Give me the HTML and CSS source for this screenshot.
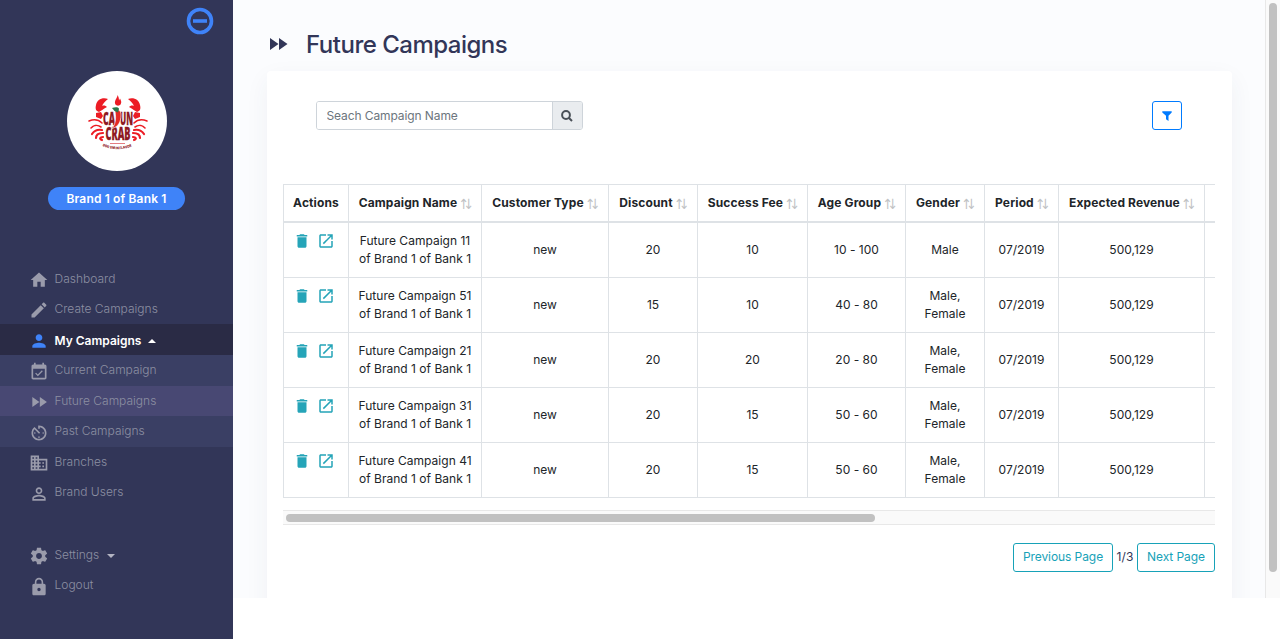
FILE: index.html
```html
<!DOCTYPE html>
<html lang="en">
<head>
<meta charset="utf-8">
<title>Future Campaigns</title>
<link rel="stylesheet" href="styles.css">
</head>
<body>
<svg class="defs" width="0" height="0">
  <symbol id="forward" viewBox="0 0 24 24"><path d="M4 18l8.5-6L4 6v12zm9-12v12l8.5-6L13 6z"/></symbol>
  <symbol id="trash" viewBox="0 0 24 24"><path d="M6 19c0 1.100.9 2 2 2h8c1.100 0 2-.9 2-2V7H6v12zM19 4h-3.500l-1-1h-5l-1 1H5v2h14V4z"/></symbol>
  <symbol id="open" viewBox="0 0 24 24"><path d="M19 19H5V5h7V3H5c-1.110 0-2 .9-2 2v14c0 1.100.89 2 2 2h14c1.100 0 2-.9 2-2v-7h-2v7zM14 3v2h3.590l-9.830 9.830 1.410 1.410L19 6.410V10h2V3h-7z"/></symbol>
</svg>
<div class="app">
  <aside class="sidebar">
    <svg class="collapse" viewBox="0 0 28 28"><circle cx="14" cy="14" r="11.500"/><path d="M7 14h14"/></svg>
    <svg class="logo" viewBox="0 0 100 100">
      <circle cx="50" cy="50" r="50" fill="#fff"/>
      <g fill="#ec1c24">
        <path d="M41 28c-6-2-11 1-12 6-1 4 0 6 3 7 2-1 4-3 8-5-1-1-3-2-5-1 1-2 3-5 6-7z"/>
        <path d="M61 28c6-2 11 1 12 6 1 4 0 6-3 7-2-1-4-3-8-5 1-1 3-2 5-1-1-2-3-5-6-7z"/>
        <path d="M29 42l5-1 2 4-2 3-5-2zM73 42l-5-1-2 4 2 3 5-2zM50.500 24c0 3-4 6-2 9.500 1 1.500 4 1.500 5 0 1.500-2 .5-4-.5-6l-1 2c0-2-.5-4-1.500-5.500z"/>
      </g>
      <g fill="none" stroke="#ec1c24" stroke-linecap="round">
        <path stroke-width="1.600" d="M35 52c-4-4-8-4-13-2M34 56c-4-3-8-1-10 1M67 52c4-4 8-4 13-2M68 56c4-3 8-1 10 1"/>
        <path stroke-width="2.200" d="M35 59c-5-1-8 1-10 4M36 62c-4 0-7 1-7 5M36 66c-3 0-4 2-1 3M67 59c5-1 8 1 10 4M66 62c4 0 7 1 7 5M66 66c3 0 4 2 1 3"/>
      </g>
      <text class="logo-word" x="36" y="54" font-size="18" textLength="12" lengthAdjust="spacingAndGlyphs">CA</text>
      <text class="logo-word" x="53" y="54" font-size="18" textLength="13" lengthAdjust="spacingAndGlyphs">UN</text>
      <text class="logo-word" x="38.500" y="69" font-size="18" textLength="25" lengthAdjust="spacingAndGlyphs">CRAB</text>
      <path d="M48 40c3-2 6-1 6 4 0 7-3 12-9 13.500 3-4 4.500-8 3-17.500z" fill="#e52a24" stroke="#fff" stroke-width=".6"/>
      <path d="M45 37c3-1 7-1 7 1l-1 3.500-3.500-1.500z" fill="#28794a"/>
      <path d="M43 72.500h15" stroke="#d8454b" stroke-width=".7"/>
      <path id="arc" d="M35.500 75Q50 81.500 66 75" fill="none"/>
      <text class="logo-tag"><textPath href="#arc" textLength="30" lengthAdjust="spacingAndGlyphs">BOIL'EM IN FLAVOR</textPath></text>
    </svg>
    <div class="brand">Brand 1 of Bank 1</div>
    <nav class="menu">
      <a class="item first"><svg viewBox="0 0 24 24"><path d="M10 20v-6h4v6h5v-8h3L12 3 2 12h3v8z"/></svg><span>Dashboard</span></a>
      <a class="item"><svg viewBox="0 0 24 24"><path d="M3 17.250V21h3.750L17.810 9.940l-3.750-3.750L3 17.250zM20.710 7.040c.39-.39.39-1.020 0-1.410l-2.340-2.340c-.39-.39-1.020-.39-1.410 0l-1.830 1.830 3.750 3.750 1.830-1.830z"/></svg><span>Create Campaigns</span></a>
      <a class="item active"><svg viewBox="0 0 24 24"><path d="M12 12c2.210 0 4-1.790 4-4s-1.790-4-4-4-4 1.790-4 4 1.790 4 4 4zm0 2c-2.670 0-8 1.340-8 4v2h16v-2c0-2.660-5.330-4-8-4z"/></svg><span>My Campaigns</span><i class="caret up"></i></a>
      <a class="item sub"><svg viewBox="0 0 24 24"><path d="M16.530 11.060L15.470 10l-4.880 4.880-2.120-2.120-1.060 1.060L10.590 17l5.940-5.940zM19 3h-1V1h-2v2H8V1H6v2H5c-1.110 0-1.990.9-1.990 2L3 19c0 1.100.89 2 2 2h14c1.100 0 2-.9 2-2V5c0-1.100-.9-2-2-2zm0 16H5V8h14v11z"/></svg><span>Current Campaign</span></a>
      <a class="item sub selected"><svg><use href="#forward"/></svg><span>Future Campaigns</span></a>
      <a class="item sub"><svg viewBox="0 0 24 24"><path d="M11 17c0 .55.45 1 1 1s1-.45 1-1-.45-1-1-1-1 .45-1 1zm0-14v4h2V5.080c3.390.49 6 3.390 6 6.920 0 3.870-3.130 7-7 7s-7-3.130-7-7c0-1.680.59-3.220 1.580-4.420L12 13l1.410-1.410-6.800-6.800v.02C4.420 6.450 3 9.050 3 12c0 4.970 4.020 9 9 9 4.970 0 9-4.030 9-9s-4.030-9-9-9h-1zm7 9c0-.55-.45-1-1-1s-1 .45-1 1 .45 1 1 1 1-.45 1-1zM6 12c0 .55.45 1 1 1s1-.45 1-1-.45-1-1-1-1 .45-1 1z"/></svg><span>Past Campaigns</span></a>
      <a class="item"><svg viewBox="0 0 24 24"><path d="M12 7V3H2v18h20V7H12zM6 19H4v-2h2v2zm0-4H4v-2h2v2zm0-4H4V9h2v2zm0-4H4V5h2v2zm4 12H8v-2h2v2zm0-4H8v-2h2v2zm0-4H8V9h2v2zm0-4H8V5h2v2zm10 12h-8v-2h2v-2h-2v-2h2v-2h-2V9h8v10zm-2-8h-2v2h2v-2zm0 4h-2v2h2v-2z"/></svg><span>Branches</span></a>
      <a class="item"><svg viewBox="0 0 24 24"><path d="M12 5.900a2.100 2.100 0 1 1 0 4.200 2.100 2.100 0 0 1 0-4.200m0 9c2.970 0 6.100 1.460 6.100 2.100v1.100H5.900V17c0-.64 3.130-2.100 6.100-2.100M12 4C9.790 4 8 5.790 8 8s1.790 4 4 4 4-1.790 4-4-1.790-4-4-4zm0 9c-2.670 0-8 1.340-8 4v3h16v-3c0-2.660-5.330-4-8-4z"/></svg><span>Brand Users</span></a>
    </nav>
    <nav class="menu bottom">
      <a class="item"><svg viewBox="0 0 24 24"><path d="M19.430 12.980c.04-.32.07-.64.07-.98s-.03-.66-.07-.98l2.110-1.650c.19-.15.24-.42.12-.64l-2-3.460c-.12-.22-.39-.3-.61-.22l-2.490 1c-.52-.4-1.080-.73-1.690-.98l-.38-2.650C14.460 2.180 14.250 2 14 2h-4c-.25 0-.46.18-.49.42l-.38 2.650c-.61.25-1.170.59-1.690.98l-2.490-1c-.23-.09-.49 0-.61.22l-2 3.460c-.13.22-.07.49.12.64l2.110 1.650c-.04.32-.07.65-.07.98s.03.66.07.98l-2.110 1.650c-.19.15-.24.42-.12.64l2 3.460c.12.22.39.3.61.22l2.490-1c.52.4 1.080.73 1.690.98l.38 2.650c.03.24.24.42.49.42h4c.25 0 .46-.18.49-.42l.38-2.650c.61-.25 1.170-.59 1.690-.98l2.490 1c.23.09.49 0 .61-.22l2-3.460c.12-.22.07-.49-.12-.64l-2.110-1.650zM12 15.500c-1.930 0-3.500-1.570-3.500-3.500s1.570-3.500 3.500-3.500 3.500 1.570 3.500 3.500-1.570 3.500-3.500 3.500z"/></svg><span>Settings</span><i class="caret down"></i></a>
      <a class="item"><svg viewBox="0 0 24 24"><path d="M18 8h-1V6c0-2.760-2.240-5-5-5S7 3.240 7 6v2H6c-1.100 0-2 .9-2 2v10c0 1.100.9 2 2 2h12c1.100 0 2-.9 2-2V10c0-1.100-.9-2-2-2zm-6 9c-1.100 0-2-.9-2-2s.9-2 2-2 2 .9 2 2-.9 2-2 2zm3.100-9H8.900V6c0-1.710 1.390-3.100 3.100-3.100s3.100 1.390 3.100 3.100v2z"/></svg><span>Logout</span></a>
    </nav>
  </aside>
  <div class="viewport">
    <main class="page">
      <h1 class="title"><svg><use href="#forward"/></svg><span>Future Campaigns</span></h1>
      <section class="card">
        <div class="toolbar">
          <div class="search">
            <input class="search-input" type="text" placeholder="Seach Campaign Name">
            <button class="search-button"><svg viewBox="0 0 12 12"><circle cx="5" cy="5" r="3.900"/><path d="M8 8l3 3"/></svg></button>
          </div>
          <button class="filter"><svg viewBox="0 0 10 10"><path d="M.3.300h9.400v1.200L6.500 4.800V10L4 8.200V4.800L.3 1.500z"/></svg></button>
        </div>
        <div class="table-wrap">
          <table class="campaigns">
            <colgroup><col class="c-actions"><col class="c-name"><col class="c-type"><col class="c-discount"><col class="c-fee"><col class="c-age"><col class="c-gender"><col class="c-period"><col class="c-revenue"><col class="c-rest"></colgroup>
            <thead><tr><th>Actions</th><th class="sort">Campaign Name</th><th class="sort">Customer Type</th><th class="sort">Discount</th><th class="sort">Success Fee</th><th class="sort">Age Group</th><th class="sort">Gender</th><th class="sort">Period</th><th class="sort">Expected Revenue</th><th></th></tr></thead>
            <tbody>
              <tr><td class="actions"><svg><use href="#trash"/></svg><svg><use href="#open"/></svg></td><td>Future Campaign 11<br>of Brand 1 of Bank 1</td><td>new</td><td>20</td><td>10</td><td>10 - 100</td><td>Male</td><td>07/2019</td><td>500,129</td><td></td></tr>
              <tr><td class="actions"><svg><use href="#trash"/></svg><svg><use href="#open"/></svg></td><td>Future Campaign 51<br>of Brand 1 of Bank 1</td><td>new</td><td>15</td><td>10</td><td>40 - 80</td><td>Male,<br>Female</td><td>07/2019</td><td>500,129</td><td></td></tr>
              <tr><td class="actions"><svg><use href="#trash"/></svg><svg><use href="#open"/></svg></td><td>Future Campaign 21<br>of Brand 1 of Bank 1</td><td>new</td><td>20</td><td>20</td><td>20 - 80</td><td>Male,<br>Female</td><td>07/2019</td><td>500,129</td><td></td></tr>
              <tr><td class="actions"><svg><use href="#trash"/></svg><svg><use href="#open"/></svg></td><td>Future Campaign 31<br>of Brand 1 of Bank 1</td><td>new</td><td>20</td><td>15</td><td>50 - 60</td><td>Male,<br>Female</td><td>07/2019</td><td>500,129</td><td></td></tr>
              <tr><td class="actions"><svg><use href="#trash"/></svg><svg><use href="#open"/></svg></td><td>Future Campaign 41<br>of Brand 1 of Bank 1</td><td>new</td><td>20</td><td>15</td><td>50 - 60</td><td>Male,<br>Female</td><td>07/2019</td><td>500,129</td><td></td></tr>
            </tbody>
          </table>
        </div>
        <div class="h-scroll"><div class="h-thumb"></div></div>
        <div class="pager"><button class="prev">Previous Page</button><span>1/3</span><button class="next">Next Page</button></div>
      </section>
    </main>
    <div class="v-scroll"><div class="v-thumb"></div></div>
  </div>
</div>
</body>
</html>
```
FILE: styles.css
```css
* { box-sizing: border-box; }
body {
  margin: 0;
  height: 639px;
  overflow: hidden;
  background: #fff;
  color: #212529;
  font: 12px/18px Inter, "Liberation Sans", sans-serif;
  letter-spacing: .02px;
}
button, input { font: inherit; letter-spacing: inherit; }
svg { display: block; flex: none; fill: currentColor; }
.defs { position: absolute; }
.app { display: flex; height: 639px; }

.sidebar {
  width: 233px;
  flex: none;
  display: flex;
  flex-direction: column;
  align-items: center;
  background: #323658;
}
.collapse {
  width: 28px;
  height: 28px;
  margin: 7px 19px 0 0;
  align-self: flex-end;
  fill: none;
  stroke: #3f83f8;
  stroke-width: 3.6;
}
.logo { width: 100px; height: 100px; margin: 36px 0 16px 1px; }
.logo-word { font-family: "Open Sans", sans-serif; font-weight: 800; fill: #8e1820; stroke: #8e1820; stroke-width: .3; letter-spacing: 0; }
.logo-tag { font-size: 3.6px; font-weight: 800; fill: #8e1820; letter-spacing: 0; }
.brand {
  width: 137px;
  height: 23px;
  border-radius: 12px;
  background: #3f83f8;
  color: #fff;
  font-weight: 600;
  line-height: 23px;
  text-align: center;
  letter-spacing: .15px;
}
.menu { width: 100%; margin-top: 53px; }
.menu.bottom { margin-top: 32px; }
.item {
  display: flex;
  align-items: center;
  height: 30.5px;
  padding-left: 28.5px;
  color: #8c8fa2;
  font-weight: 300;
  letter-spacing: 0;
}
.item svg { width: 20px; height: 20px; margin: 3px 6px 0 0; fill: #9a9bab; overflow: visible; }
.item.first span { padding-top: 1px; }
.item.active { background: #2a2b45; color: #fff; font-weight: 600; height: 31px; }
.item.active span { margin-top: 2px; }
.item.active svg { fill: #3f83f8; }
.item.sub { background: #3a3f64; }
.item.selected { background: #484873; }
.caret { border: 4px solid transparent; margin-left: 7px; }
.caret.up { border-top: 0; border-bottom-color: #fff; margin-top: 2px; }
.caret.down { border-bottom: 0; border-top-color: #b3b4c2; margin: 2px 0 0 8px; }

.viewport { flex: 1; display: flex; height: 598px; overflow: hidden; background: #fbfcfe; }
.page { width: 1032px; padding: 29px 33px 0 34px; flex: none; }
.title {
  display: flex;
  align-items: center;
  height: 32px;
  margin: 0 0 10px;
  color: #323658;
  font-size: 24px;
  font-weight: 500;
  letter-spacing: -.5px;
}
.title svg { width: 24px; height: 24px; margin: -2px 16px 0 -1px; }
.card {
  height: 620px;
  padding: 30px 17px 0 16px;
  border-radius: 4px;
  background: #fff;
  box-shadow: 0 8px 24px rgba(50, 70, 90, .06);
}
.toolbar { display: flex; justify-content: space-between; padding: 0 33px; height: 83px; }
.search { display: flex; width: 267px; height: 29px; border: 1px solid #ced4da; border-radius: 3px; overflow: hidden; }
.search-input { flex: 1; min-width: 0; border: 0; padding: 0 9.500px; outline: 0; background: #fff; letter-spacing: -.1px; }
.search-input::placeholder { color: #6c757d; opacity: 1; }
.search-button { width: 30px; padding: 0 1px 0 0; border: 0; border-left: 1px solid #ced4da; background: #e9ecef; color: #495057; }
.search-button svg { width: 12px; height: 12px; margin: auto; fill: none; stroke: currentColor; stroke-width: 2; }
.filter { width: 30px; height: 29px; padding: 0; border: 1px solid #007bff; border-radius: 3px; background: #fff; color: #007bff; }
.filter svg { width: 10px; height: 10px; margin: auto; }

.table-wrap { width: 932px; overflow: hidden; }
.campaigns { width: 1012px; table-layout: fixed; border-collapse: separate; border-spacing: 0; }
.c-actions { width: 66px; }
.c-name { width: 133px; }
.c-type { width: 127px; }
.c-discount { width: 89px; }
.c-fee { width: 110px; }
.c-age { width: 98px; }
.c-gender { width: 79px; }
.c-period { width: 74px; }
.c-revenue { width: 146px; }
.c-rest { width: 90px; }
th, td { padding: 0; border: 0 solid #dee2e6; border-width: 0 1px 1px 0; text-align: center; white-space: nowrap; }
th:first-child, td:first-child { border-left-width: 1px; }
th { height: 39px; border-top-width: 1px; border-bottom-width: 2px; font-weight: 700; letter-spacing: .13px; }
td { height: 55px; }
th.sort { padding-left: 2px; }
.sort::after { content: "↑↓"; margin-left: 1px; color: #c0c2c4; font: 400 14px/12px "Liberation Sans"; letter-spacing: -7px; margin-right: 0; padding-right: 5px; vertical-align: -2px; }
.sort::after { font-family: "DejaVu Sans Condensed", "DejaVu Sans"; letter-spacing: -5.5px; }
.actions { padding: 9px 0 0; vertical-align: top; color: #25a4b8; }
.actions svg { display: inline-block; width: 18px; height: 18px; margin: 0 3px; vertical-align: top; }
.actions svg:last-child { margin-right: 7px; }
.h-scroll { height: 15px; margin-top: 12px; width: 932px; border: 1px solid #e8e8e8; border-width: 1px 0; background: #fafafa; padding: 3px; }
.h-thumb { width: 589px; height: 8px; border-radius: 4px; background: #c1c1c1; }
.pager { display: flex; justify-content: flex-end; margin-top: 18px; color: #323658; }
.pager span { width: 24px; line-height: 27px; text-align: center; letter-spacing: .2px; }
.pager button { height: 29px; padding: 0 0 1px; border: 1px solid #17a2b8; border-radius: 3px; background: #fff; color: #17a2b8; letter-spacing: -.08px; }
.pager .prev { width: 100px; }
.pager .next { width: 78px; }
.v-scroll { width: 15px; border-left: 1px solid #e8e8e8; background: #fafafa; padding: 3px; }
.v-thumb { width: 8px; height: 569px; border-radius: 4px; background: #c1c1c1; }
```
